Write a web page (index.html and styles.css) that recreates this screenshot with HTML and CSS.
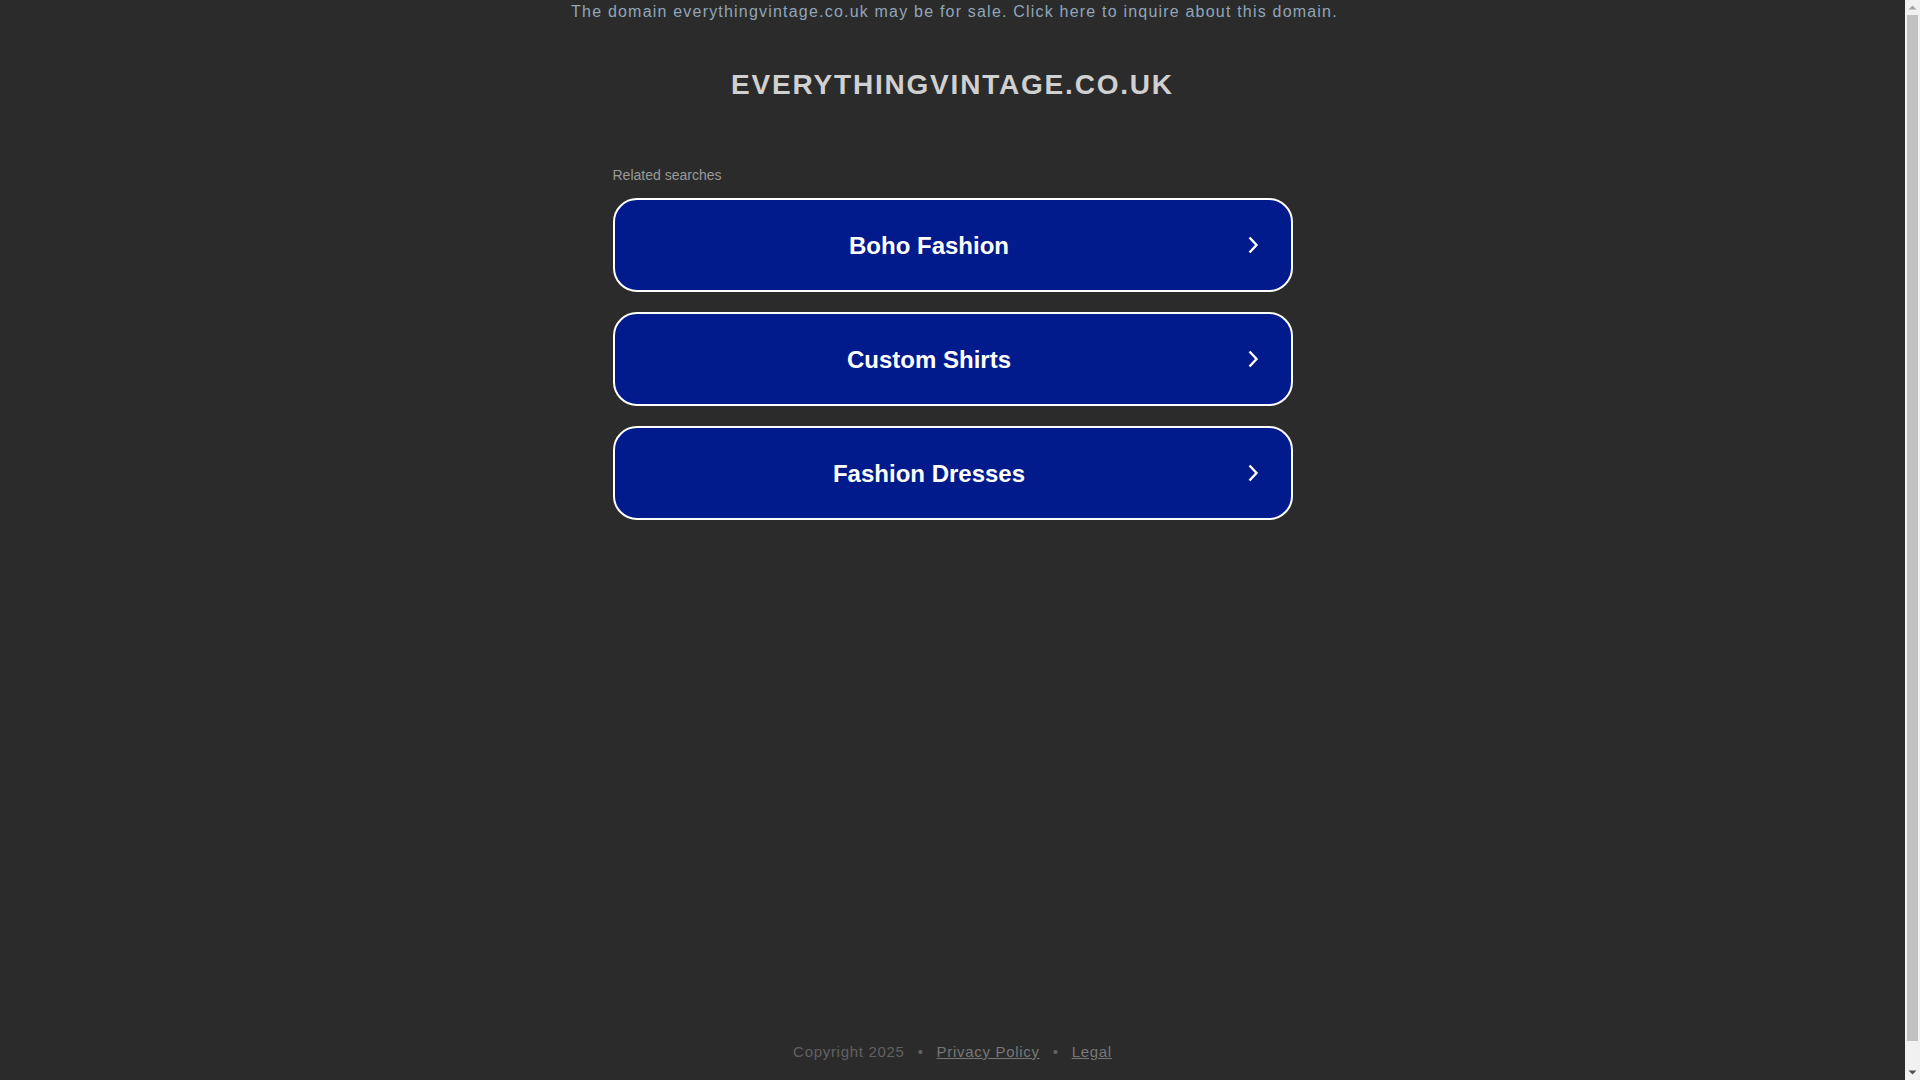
FILE: index.html
```html
<!DOCTYPE html>
<html lang="en">
<head>
<meta charset="utf-8">
<title>everythingvintage.co.uk</title>
<link rel="stylesheet" href="styles.css">
</head>
<body>
<div class="page">
  <div class="topbar"><a class="topbar-link" href="#">The domain everythingvintage.co.uk may be for sale. Click here to inquire about this domain.</a></div>
  <h1 class="title">EVERYTHINGVINTAGE.CO.UK</h1>
  <div class="related">
    <div class="related-label">Related searches</div>
    <a class="card" href="#"><span class="card-text">Boho Fashion</span><svg class="chev" viewBox="0 0 18 24" width="18" height="24"><path d="M5.5 4.5 L12.5 12 L5.5 19.5" fill="none" stroke="#fff" stroke-width="2.4"/></svg></a>
    <a class="card" href="#"><span class="card-text">Custom Shirts</span><svg class="chev" viewBox="0 0 18 24" width="18" height="24"><path d="M5.5 4.5 L12.5 12 L5.5 19.5" fill="none" stroke="#fff" stroke-width="2.4"/></svg></a>
    <a class="card" href="#"><span class="card-text">Fashion Dresses</span><svg class="chev" viewBox="0 0 18 24" width="18" height="24"><path d="M5.5 4.5 L12.5 12 L5.5 19.5" fill="none" stroke="#fff" stroke-width="2.4"/></svg></a>
  </div>
  <div class="footer">
    <span class="copy">Copyright 2025</span>
    <span class="dot">•</span>
    <a class="flink" href="#">Privacy Policy</a>
    <span class="dot">•</span>
    <a class="flink" href="#">Legal</a>
  </div>
</div>
<div class="scrollbar">
  <svg class="sb-arrow" viewBox="0 0 15 15" width="15" height="15"><path d="M3.5 9.5 L7.5 5.5 L11.5 9.5 Z" fill="#a3a3a3"/></svg>
  <div class="sb-track"><div class="sb-thumb"></div></div>
  <svg class="sb-arrow" viewBox="0 0 15 15" width="15" height="15"><path d="M3.5 5.5 L7.5 9.5 L11.5 5.5 Z" fill="#505050"/></svg>
</div>
</body>
</html>
```
FILE: styles.css
```css
html, body {
  margin: 0;
  padding: 0;
  background: #2b2b2b;
  overflow: hidden;
}
body {
  font-family: "Liberation Sans", Arial, sans-serif;
  margin-right: 15px;
}
.page {
  height: 1080px;
  display: flex;
  flex-direction: column;
  align-items: center;
}
.topbar {
  padding-top: 1px;
  padding-left: 4px;
  font-size: 16px;
  line-height: 22px;
  letter-spacing: 1.2px;
  text-align: center;
}
.topbar-link {
  color: #91a6b9;
  text-decoration: none;
}
.title {
  margin: 45px 0 0 0;
  font-size: 28px;
  line-height: 34px;
  font-weight: 700;
  letter-spacing: 1.8px;
  color: #d0d0d0;
}
.related {
  width: 680px;
  margin-top: 64px;
  display: flex;
  flex-direction: column;
}
.related-label {
  font-size: 14px;
  line-height: 18px;
  color: #9a9a9a;
  margin-bottom: 14px;
}
.card {
  box-sizing: border-box;
  height: 94px;
  margin-bottom: 20px;
  border: 2px solid #ffffff;
  border-radius: 24px;
  background: #011a8c;
  display: flex;
  align-items: center;
  text-decoration: none;
}
.card-text {
  flex: 1;
  padding-top: 2px;
  text-align: center;
  font-size: 24px;
  line-height: 28px;
  font-weight: 700;
  color: #ffffff;
}
.chev {
  display: block;
  margin-right: 29px;
}
.footer {
  margin-top: auto;
  padding-bottom: 18px;
  display: flex;
  align-items: center;
  font-size: 15px;
  line-height: 20px;
  letter-spacing: 0.7px;
}
.copy {
  color: #616161;
}
.dot {
  color: #616161;
  padding: 0 13px;
}
.flink {
  color: #777777;
  text-decoration: underline;
}
.scrollbar {
  position: fixed;
  top: 0;
  right: 0;
  width: 15px;
  height: 1080px;
  background: #f1f1f1;
  display: flex;
  flex-direction: column;
}
.sb-arrow {
  display: block;
  flex: none;
}
.sb-track {
  flex: 1;
  padding: 0 2px 24px 2px;
}
.sb-thumb {
  height: 100%;
  background: #c1c1c1;
}
```
